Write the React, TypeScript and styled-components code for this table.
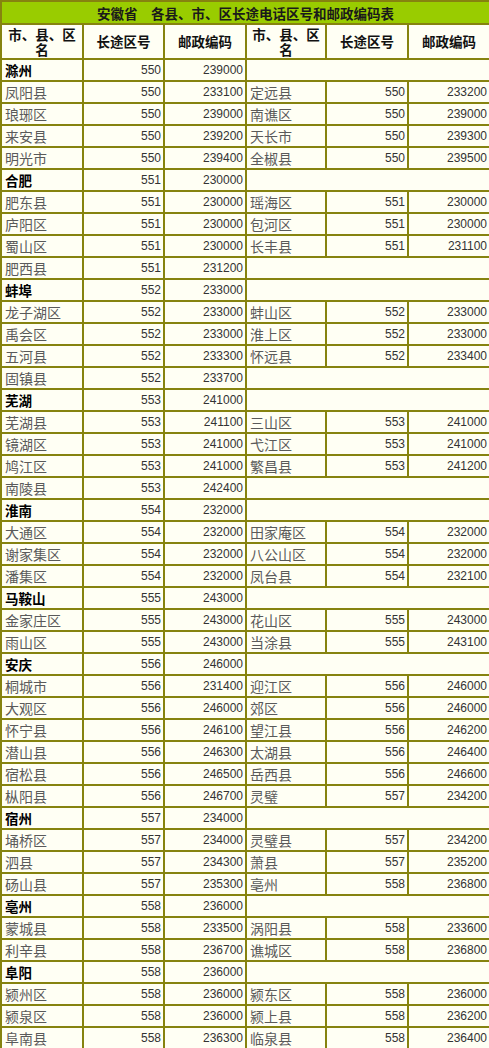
import React from "react";
import styled, { createGlobalStyle } from "styled-components";

const Global = createGlobalStyle`
  html, body { margin: 0; padding: 0; background: #ffffff; }
  body { font-family: "Liberation Sans", "Noto Sans CJK SC", sans-serif; }
`;

const OLIVE = "#86830f";

const Table = styled.table`
  width: 489px;
  table-layout: fixed;
  border-collapse: collapse;
  background: #fffff4;
`;

const Col = styled.col<{ $w: number }>`
  width: ${(p) => p.$w}px;
`;

const TitleRow = styled.tr`
  height: 23px;
`;

const TitleCell = styled.td`
  background: #99cc00;
  border: 2px solid ${OLIVE};
  padding: 0;
  text-align: center;
  font-family: "Noto Sans CJK SC", sans-serif;
  font-weight: 700;
  font-size: 13.5px;
  line-height: 16px;
  color: #1a1a1a;
`;

const HeadRow = styled.tr`
  height: 35px;
`;

const HeadCell = styled.td<{ $thin?: boolean }>`
  border: 2px solid ${OLIVE};
  ${(p) => (p.$thin ? `border-left: 1px solid #6e6a00;` : "")}
  padding: 0 2px;
  text-align: center;
  vertical-align: middle;
  font-family: "Noto Sans CJK SC", sans-serif;
  font-weight: 700;
  font-size: 13.5px;
  line-height: 15px;
  color: #111;
`;

const Row = styled.tr`
  height: 22px;
`;

const NameCell = styled.td<{ $group?: boolean }>`
  border: 2px solid ${OLIVE};
  padding: 0 0 0 3px;
  text-align: left;
  vertical-align: middle;
  white-space: nowrap;
  overflow: hidden;
  font-family: "Noto Sans CJK SC", sans-serif;
  font-size: ${(p) => (p.$group ? "13.5px" : "14px")};
  font-weight: ${(p) => (p.$group ? 700 : 400)};
  color: ${(p) => (p.$group ? "#000" : "#5a5a5a")};
  line-height: 18px;
`;

const NumCell = styled.td<{ $thin?: boolean }>`
  border: 2px solid ${OLIVE};
  ${(p) => (p.$thin ? `border-left: 1px solid #6e6a00;` : "")}
  padding: 0 2px 0 0;
  text-align: right;
  vertical-align: middle;
  white-space: nowrap;
  font-family: "Liberation Sans", Arial, sans-serif;
  font-size: 12px;
  color: #333;
  line-height: 18px;
`;

const BlankCell = styled.td`
  border: 2px solid ${OLIVE};
  padding: 0;
`;

type Entry = [string, string, string];
type Group = { city: Entry; rows: [Entry, Entry | null][] };

const groups: Group[] = [
  {
    city: ["滁州", "550", "239000"],
    rows: [
      [["凤阳县", "550", "233100"], ["定远县", "550", "233200"]],
      [["琅琊区", "550", "239000"], ["南谯区", "550", "239000"]],
      [["来安县", "550", "239200"], ["天长市", "550", "239300"]],
      [["明光市", "550", "239400"], ["全椒县", "550", "239500"]],
    ],
  },
  {
    city: ["合肥", "551", "230000"],
    rows: [
      [["肥东县", "551", "230000"], ["瑶海区", "551", "230000"]],
      [["庐阳区", "551", "230000"], ["包河区", "551", "230000"]],
      [["蜀山区", "551", "230000"], ["长丰县", "551", "231100"]],
      [["肥西县", "551", "231200"], null],
    ],
  },
  {
    city: ["蚌埠", "552", "233000"],
    rows: [
      [["龙子湖区", "552", "233000"], ["蚌山区", "552", "233000"]],
      [["禹会区", "552", "233000"], ["淮上区", "552", "233000"]],
      [["五河县", "552", "233300"], ["怀远县", "552", "233400"]],
      [["固镇县", "552", "233700"], null],
    ],
  },
  {
    city: ["芜湖", "553", "241000"],
    rows: [
      [["芜湖县", "553", "241100"], ["三山区", "553", "241000"]],
      [["镜湖区", "553", "241000"], ["弋江区", "553", "241000"]],
      [["鸠江区", "553", "241000"], ["繁昌县", "553", "241200"]],
      [["南陵县", "553", "242400"], null],
    ],
  },
  {
    city: ["淮南", "554", "232000"],
    rows: [
      [["大通区", "554", "232000"], ["田家庵区", "554", "232000"]],
      [["谢家集区", "554", "232000"], ["八公山区", "554", "232000"]],
      [["潘集区", "554", "232000"], ["凤台县", "554", "232100"]],
    ],
  },
  {
    city: ["马鞍山", "555", "243000"],
    rows: [
      [["金家庄区", "555", "243000"], ["花山区", "555", "243000"]],
      [["雨山区", "555", "243000"], ["当涂县", "555", "243100"]],
    ],
  },
  {
    city: ["安庆", "556", "246000"],
    rows: [
      [["桐城市", "556", "231400"], ["迎江区", "556", "246000"]],
      [["大观区", "556", "246000"], ["郊区", "556", "246000"]],
      [["怀宁县", "556", "246100"], ["望江县", "556", "246200"]],
      [["潜山县", "556", "246300"], ["太湖县", "556", "246400"]],
      [["宿松县", "556", "246500"], ["岳西县", "556", "246600"]],
      [["枞阳县", "556", "246700"], ["灵璧", "557", "234200"]],
    ],
  },
  {
    city: ["宿州", "557", "234000"],
    rows: [
      [["埇桥区", "557", "234000"], ["灵璧县", "557", "234200"]],
      [["泗县", "557", "234300"], ["萧县", "557", "235200"]],
      [["砀山县", "557", "235300"], ["亳州", "558", "236800"]],
    ],
  },
  {
    city: ["亳州", "558", "236000"],
    rows: [
      [["蒙城县", "558", "233500"], ["涡阳县", "558", "233600"]],
      [["利辛县", "558", "236700"], ["谯城区", "558", "236800"]],
    ],
  },
  {
    city: ["阜阳", "558", "236000"],
    rows: [
      [["颍州区", "558", "236000"], ["颍东区", "558", "236000"]],
      [["颍泉区", "558", "236000"], ["颍上县", "558", "236200"]],
      [["阜南县", "558", "236300"], ["临泉县", "558", "236400"]],
    ],
  },
];

const Cells: React.FC<{ e: Entry; group?: boolean; right?: boolean }> = ({ e, group, right }) => (
  <>
    <NameCell $group={group}>{e[0]}</NameCell>
    <NumCell $thin={right}>{e[1]}</NumCell>
    <NumCell $thin={right}>{e[2]}</NumCell>
  </>
);

export default function App() {
  return (
    <>
      <Global />
      <Table>
        <colgroup>
          <Col $w={82} />
          <Col $w={81} />
          <Col $w={82} />
          <Col $w={80} />
          <Col $w={82} />
          <Col $w={82} />
        </colgroup>
        <tbody>
          <TitleRow>
            <TitleCell colSpan={6}>安徽省　各县、市、区长途电话区号和邮政编码表</TitleCell>
          </TitleRow>
          <HeadRow>
            <HeadCell>市、县、区名</HeadCell>
            <HeadCell>长途区号</HeadCell>
            <HeadCell>邮政编码</HeadCell>
            <HeadCell>市、县、区名</HeadCell>
            <HeadCell $thin>长途区号</HeadCell>
            <HeadCell $thin>邮政编码</HeadCell>
          </HeadRow>
          {groups.map((g) => (
            <React.Fragment key={g.city[0] + g.city[2]}>
              <Row>
                <Cells e={g.city} group />
                <BlankCell colSpan={3} />
              </Row>
              {g.rows.map(([l, r], i) => (
                <Row key={i}>
                  <Cells e={l} />
                  {r ? <Cells e={r} right /> : <BlankCell colSpan={3} />}
                </Row>
              ))}
            </React.Fragment>
          ))}
        </tbody>
      </Table>
    </>
  );
}
